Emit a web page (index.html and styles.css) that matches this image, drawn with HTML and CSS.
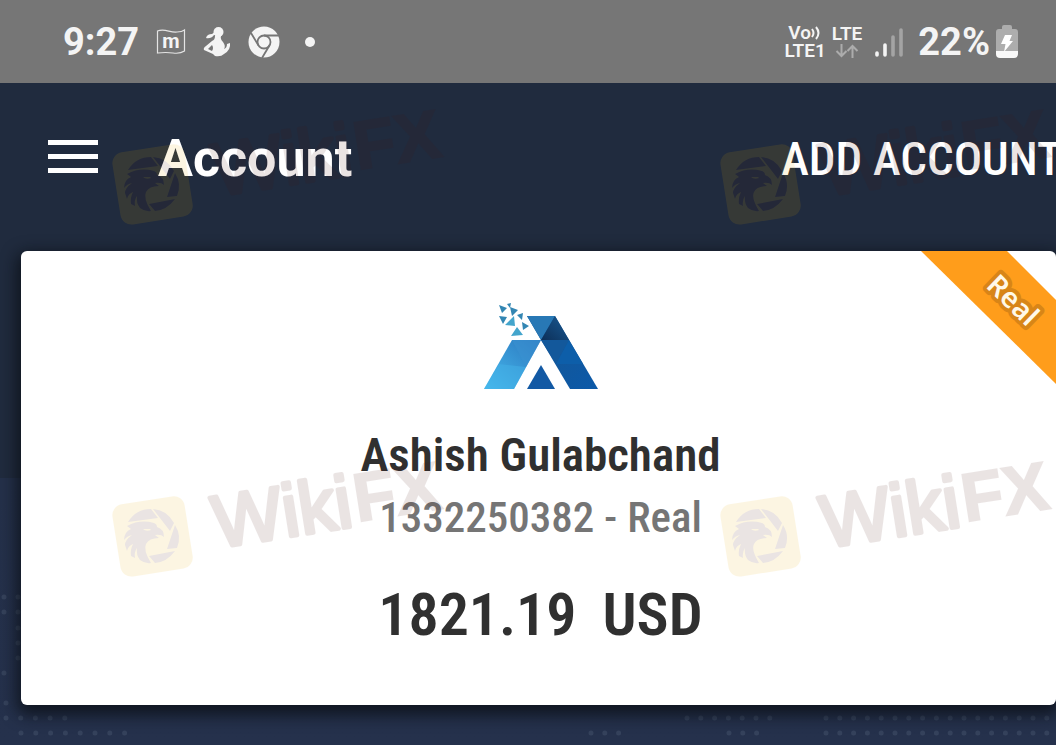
FILE: index.html
```html
<!DOCTYPE html>
<html lang="en">

<head>
    <meta charset="utf-8">
    <meta name="viewport" content="width=device-width, initial-scale=1">
    <title>Account</title>
    <link rel="stylesheet" href="styles.css">
</head>

<body>
    <svg class="dots" width="1056" height="160" aria-hidden="true">
        <g fill="none" stroke="#46546c" stroke-width="5" stroke-linecap="round">
            <path d="M4 12h0M18 12h0M4 27h0M18 27h0M18 43h0M18 58h0M18 73h0M4 88h0M6 118h0" />
            <path d="M6 133H70" stroke-dasharray="0 14.7" />
            <path d="M109 133h0M21 148H130" stroke-dasharray="0 14.8" />
            <path d="M687 133H775M826 133H1056M591 148H620M701 148h0M729 148H760M826 148H1056" stroke-dasharray="0 13.8" />
        </g>
    </svg>

    <div class="status">
        <div class="statusLeft">
            <span class="time">9:27</span>
            <svg width="30" height="28" viewBox="0 0 30 28">
                <path d="M1.500 3C9 0 14 5 21 4Q26 4 28.500 2V23Q24 26 17 25T1.500 25Z" fill="none" stroke="#e4e4e4" stroke-width="1.200" />
                <text class="flagText" x="15" y="20">m</text>
            </svg>
            <svg width="28" height="32" viewBox="0 0 28 32" fill="#f4f4f4">
                <circle cx="15.500" cy="6" r="5" />
                <path d="M13 5L9 8Q4 8 3 12Q8 13 11 9L14 9Z" />
                <path d="M12 10L18 10Q17 13 20 16Q23 20 21 23Q24 22 24 18L27 17Q28 24 21 28Q18 31 12 30L10 28L1 24Q0 22 3 20L9 15Q12 14 12 10ZM9 19L5 23L9 25Q11 22 9 19Z" fill-rule="evenodd" />
            </svg>
            <svg width="32" height="32" viewBox="0 0 32 32">
                <circle cx="16" cy="16" r="15.500" fill="#f4f4f4" />
                <g fill="none" stroke="#767676" stroke-width="1.800">
                    <circle cx="16" cy="16" r="6.500" />
                    <path d="M16 9.500H31M10.400 19.200L3 7M21.600 19.200L14 32" />
                </g>
            </svg>
            <span class="more"></span>
        </div>
        <div class="statusRight">
            <div class="net">
                <span>Vo<svg width="11" height="16" viewBox="0 0 11 16" fill="none" stroke="#f4f4f4" stroke-width="2"><path d="M1 4Q4 8 1 12M5 2Q10 8 5 14" /></svg></span>
                <span>LTE1</span>
            </div>
            <div class="net">
                <span>LTE</span>
                <svg width="24" height="16" viewBox="0 0 24 16" fill="none" stroke="#acacac" stroke-width="2">
                    <path d="M6.500 1V13M1.500 8L6.500 13L11.500 8M17.500 15V3M12.500 8L17.500 3L22.500 8" />
                </svg>
            </div>
            <svg class="signal" width="30" height="32" viewBox="0 0 30 32" stroke-width="3.600" stroke-linecap="round">
                <path d="M3 27V29M11 19V29" stroke="#f4f4f4" />
                <path d="M19 11V29M27 4V29" stroke="#a4a4a4" />
            </svg>
            <span class="percent">22%</span>
            <svg width="22" height="33" viewBox="0 0 22 33">
                <path d="M6 4V2Q6 0 8 0H14Q16 0 16 2V4H19Q22 4 22 7V26H0V7Q0 4 3 4Z" fill="#adadad" />
                <path d="M0 26H22V29Q22 33 18 33H4Q0 33 0 29Z" fill="#f8f8f8" />
                <path d="M9 10H16L13.500 16H17L8 27L9.500 19H5Z" fill="#fff" />
            </svg>
        </div>
    </div>

    <header class="bar">
        <button class="menu" aria-label="Menu"><i></i><i></i><i></i></button>
        <h1>Account</h1>
        <button class="add">ADD ACCOUNT</button>
    </header>

    <main class="card">
        <svg class="ribbon" width="135" height="134" viewBox="0 0 135 134">
            <path d="M0 0H86L135 49V133Z" fill="#ff9d1b" />
            <text class="ribbonText" x="92" y="59" transform="rotate(44 92 49)">Real</text>
        </svg>
        <svg class="logo" width="116" height="88" viewBox="0 0 116 88">
            <defs>
                <linearGradient id="leftLeg" x1="0" y1="1" x2="1" y2="0">
                    <stop offset="0" stop-color="#48bdf0" />
                    <stop offset="1" stop-color="#2a75bd" />
                </linearGradient>
                <linearGradient id="rightLeg" x1="0" y1="0" x2="1" y2="1">
                    <stop offset="0" stop-color="#18568f" />
                    <stop offset="1" stop-color="#0b59a9" />
                </linearGradient>
                <linearGradient id="fold" x1="1" y1="0" x2="0" y2="1">
                    <stop offset="0" stop-color="#195a94" />
                    <stop offset="1" stop-color="#0c2f58" />
                </linearGradient>
            </defs>
            <path d="M29 37H58L31 86H1Z" fill="url(#leftLeg)" />
            <path d="M16 61L43 64L31 86H1Z" fill="#43b2e8" opacity=".5" />
            <path d="M29 37L43 64L58 37Z" fill="#3a91d1" opacity=".6" />
            <path d="M44 13H72L115 86H87L58 37Z" fill="url(#rightLeg)" />
            <path d="M44 13H72L58 37Z" fill="#2878b5" />
            <path d="M72 13L86 37H58Z" fill="url(#fold)" />
            <path d="M58 37H86L73 61Z" fill="#13589b" />
            <path d="M86 37L100 61H73Z" fill="#0d5ea9" />
            <path d="M58 62L72 86H44Z" fill="#1259a4" />
            <path d="M16 2L24 5L19 10ZM24 1L28 0L27 5ZM27 4L35 7L29 13ZM16 13L24 14L20 21ZM34 12L40 10L39 17ZM39 19L46 23L40 27Z" fill="#3386b3" />
            <path d="M22 22L31 13L32 23ZM28 33L34 24L40 32Z" fill="#43a5cc" />
        </svg>
        <h2>Ashish Gulabchand</h2>
        <p class="number">1332250382 - Real</p>
        <p class="balance"><span>1821.19</span><span>USD</span></p>
    </main>

    <svg class="marks" width="1056" height="745" aria-hidden="true">
        <defs>
            <g id="mark">
                <rect x="16" y="48" width="73" height="73" rx="11" fill="#ebaf00" transform="rotate(-9 52 84)" />
                <g fill="#49140e">
                    <path d="M28 70Q36 57 51 57L58 66ZM53 57Q67 58 74 71L70 79ZM75 73Q82 84 77 96L67 97ZM75 99Q67 110 55 111L49 104Z" />
                    <path d="M27 74Q40 67 54 71Q57 72 57 75Q64 77 64 85Q61 82 55 83L59 86Q49 86 46 92Q43 98 51 111Q45 112 40 108Q36 103 37 96Q34 100 35 106L31 104Q30 98 33 92Q28 94 27 99L25 93Q25 88 32 83Q27 84 24 88Q24 80 31 77ZM43 77Q46 80 51 78L50 77Z" fill-rule="evenodd" />
                </g>
                <text class="markText" x="117" y="96" transform="rotate(-9 117 96)"><tspan class="markRound">Wiki</tspan><tspan dx="3" dy="-4">FX</tspan></text>
            </g>
        </defs>
        <g opacity=".11"><use href="#mark" x="100" y="100" /></g>
        <g opacity=".11"><use href="#mark" x="708" y="100" /></g>
        <g opacity=".11"><use href="#mark" x="100" y="452" /></g>
        <g opacity=".11"><use href="#mark" x="708" y="452" /></g>
    </svg>
</body>

</html>
```
FILE: styles.css
```css
html {
    padding: 0;
    margin: 0;
}

body {
    margin: 0;
    min-height: 100vh;
    position: relative;
    overflow: hidden;
    font-family: Roboto, "Liberation Sans", sans-serif;
    background: linear-gradient(#202b3e 478px, #243049 478px, #25314c);
}

h1,
h2,
p {
    margin: 0;
}

button {
    border: 0;
    padding: 0;
    background: none;
    color: #fff;
    font-family: inherit;
}

.dots {
    position: absolute;
    left: 0;
    bottom: 0;
    opacity: .5;
}

.status {
    position: relative;
    height: 83px;
    box-sizing: border-box;
    padding: 0 38px 0 63px;
    display: flex;
    justify-content: space-between;
    align-items: center;
    background-color: #767676;
    color: #f4f4f4;
}

.statusLeft {
    display: flex;
    align-items: center;
    gap: 17px;
}

.statusRight {
    display: flex;
    align-items: center;
    gap: 6px;
}

.time,
.percent {
    font-size: 38px;
    font-weight: bold;
    line-height: 48px;
}

.flagText {
    font: bold 20px Roboto, sans-serif;
    text-anchor: middle;
    fill: #f4f4f4;
}

.more {
    width: 10px;
    height: 10px;
    margin-left: 8px;
    border-radius: 50%;
    background-color: #f4f4f4;
}

.net {
    display: flex;
    flex-direction: column;
    align-items: center;
    font-size: 19px;
    font-weight: 600;
    line-height: 18px;
}

.net span {
    display: flex;
    align-items: center;
}

.signal {
    margin: 0 8px 0 6px;
}

.bar {
    position: relative;
    height: 168px;
    box-sizing: border-box;
    padding: 0 0 18px 48px;
    display: flex;
    align-items: center;
}

.menu {
    width: 50px;
    padding-bottom: 4px;
    display: flex;
    flex-direction: column;
    gap: 9px;
}

.menu i {
    width: 100%;
    height: 5px;
    background-color: #fff;
}

.bar h1 {
    margin-left: 60px;
    font-size: 52px;
    font-weight: 700;
    color: #fff;
}

.add {
    margin-left: auto;
    margin-right: -6px;
    font-family: "Roboto Condensed", "Liberation Sans Narrow", Roboto, sans-serif;
    font-size: 47px;
    font-weight: 500;
    white-space: nowrap;
}

.card {
    position: relative;
    margin-left: 21px;
    height: 454px;
    box-sizing: border-box;
    padding-top: 52px;
    padding-left: 4px;
    display: flex;
    flex-direction: column;
    align-items: center;
    border-radius: 6px;
    background-color: #fff;
    box-shadow: 0 6px 16px 4px rgba(8, 12, 18, .75);
    font-family: "Roboto Condensed", "Liberation Sans Narrow", Roboto, sans-serif;
    color: #303030;
}

.ribbon {
    position: absolute;
    top: 0;
    right: 0;
}

.ribbonText {
    font: 600 28px "Noto Sans", sans-serif;
    text-anchor: middle;
    fill: #fff8e8;
    stroke: #d88517;
    stroke-width: 8px;
    stroke-linejoin: round;
    paint-order: stroke;
}

.card h2 {
    margin-top: 34px;
    font-size: 47px;
    font-weight: 600;
    line-height: 60px;
}

.number {
    font-size: 43px;
    font-weight: 500;
    line-height: 64px;
    color: #757575;
}

.balance {
    display: flex;
    gap: 26px;
    margin-top: 26px;
    font-size: 60px;
    font-weight: 600;
    line-height: 80px;
}

.marks {
    position: absolute;
    top: 0;
    left: 0;
    pointer-events: none;
}

.markText {
    font: bold 68px "Liberation Sans", sans-serif;
    fill: #49140e;
    stroke: #49140e;
    stroke-width: 2px;
}

.markRound {
    font-size: 74px;
    font-weight: normal;
    stroke-width: 4px;
    stroke-linejoin: round;
}
```
